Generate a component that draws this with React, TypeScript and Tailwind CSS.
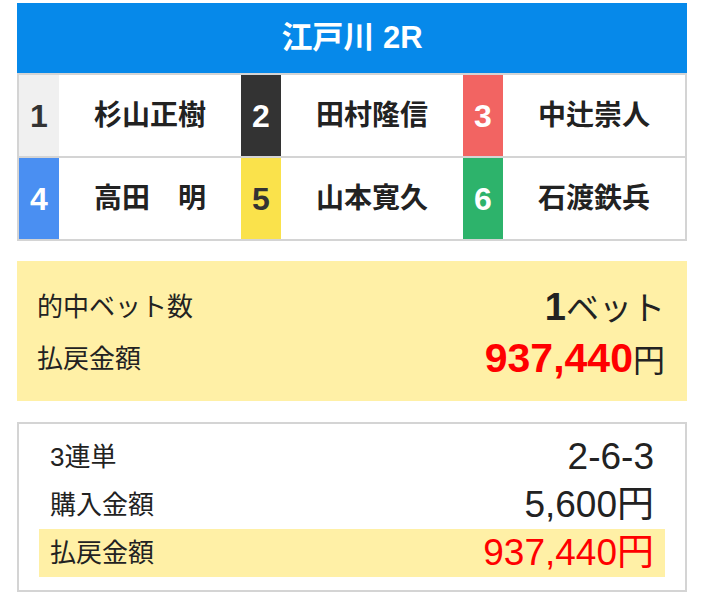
import React from 'react';

type Racer = { no: number; name: string; bg: string; fg: string };

const racers: Racer[] = [
  { no: 1, name: '杉山正樹', bg: 'bg-[#f0f0f0]', fg: 'text-[#333333]' },
  { no: 2, name: '田村隆信', bg: 'bg-[#333333]', fg: 'text-white' },
  { no: 3, name: '中辻崇人', bg: 'bg-[#f26462]', fg: 'text-white' },
  { no: 4, name: '高田　明', bg: 'bg-[#4a8ff2]', fg: 'text-white' },
  { no: 5, name: '山本寛久', bg: 'bg-[#fae24b]', fg: 'text-[#333333]' },
  { no: 6, name: '石渡鉄兵', bg: 'bg-[#2db36b]', fg: 'text-white' },
];

const RacerCell: React.FC<{ r: Racer }> = ({ r }) => (
  <div className="flex h-[81px]">
    <div className={`w-[40px] flex items-center justify-center text-[32px] font-bold ${r.bg} ${r.fg}`}>{r.no}</div>
    <div className="flex-1 flex items-center justify-center text-[28px] font-bold text-[#222222]">{r.name}</div>
  </div>
);

const App: React.FC = () => {
  return (
    <div
      className="w-[704px] min-h-[606px] bg-white pt-[3px] px-[17px]"
      style={{ fontFamily: '"Liberation Sans", "Noto Sans CJK JP", sans-serif' }}
    >
      {/* race title */}
      <div className="h-[70px] bg-[#0689ea] flex items-center justify-center text-white text-[31px] font-bold">
        江戸川 2R
      </div>

      {/* racers */}
      <div className="border-2 border-[#d4d4d4]">
        <div className="grid grid-cols-3">
          {racers.slice(0, 3).map((r) => (
            <RacerCell key={r.no} r={r} />
          ))}
        </div>
        <div className="grid grid-cols-3 border-t-2 border-[#d4d4d4]">
          {racers.slice(3).map((r) => (
            <RacerCell key={r.no} r={r} />
          ))}
        </div>
      </div>

      {/* hit summary */}
      <div className="mt-[20px] bg-[#fff0a6] pt-[20px] pb-[16px] pl-[20px] pr-[22px] text-[#222222]">
        <div className="h-[52px] flex items-center justify-between">
          <span className="text-[26px]">的中ベット数</span>
          <span className="flex items-baseline">
            <span className="text-[38px] font-bold">1</span>
            <span className="text-[33px]">ベット</span>
          </span>
        </div>
        <div className="h-[52px] flex items-center justify-between">
          <span className="text-[26px]">払戻金額</span>
          <span className="flex items-baseline">
            <span className="text-[41px] font-bold text-[#ff0000]">937,440</span>
            <span className="text-[32px]">円</span>
          </span>
        </div>
      </div>

      {/* bet detail */}
      <div className="mt-[21px] border-2 border-[#d4d4d4] pt-[9px] pb-[13px] px-[20px] text-[#222222]">
        <div className="h-[48px] flex items-center justify-between px-[11px]">
          <span className="text-[26px]">3連単</span>
          <span className="text-[37px]">2-6-3</span>
        </div>
        <div className="h-[48px] flex items-center justify-between px-[11px]">
          <span className="text-[26px]">購入金額</span>
          <span className="text-[37px]">5,600円</span>
        </div>
        <div className="h-[48px] flex items-center justify-between px-[11px] bg-[#fff0a6]">
          <span className="text-[26px]">払戻金額</span>
          <span className="text-[37px] text-[#ff0000]">937,440円</span>
        </div>
      </div>
    </div>
  );
};

export default App;
